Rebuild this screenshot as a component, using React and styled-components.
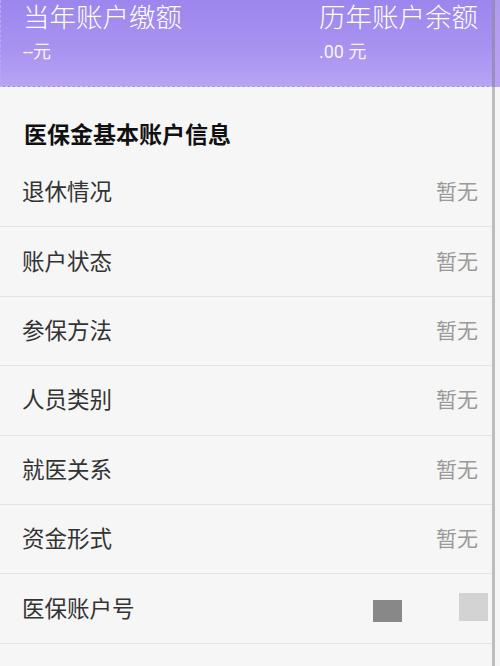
import React from 'react'
import styled, { createGlobalStyle } from 'styled-components'

const GlobalStyle = createGlobalStyle`
  html, body {
    margin: 0;
    padding: 0;
    background: #f6f6f6;
    font-family: Roboto, "Noto Sans CJK SC", sans-serif;
  }
`

const rows = [
  { label: '退休情况', value: '暂无' },
  { label: '账户状态', value: '暂无' },
  { label: '参保方法', value: '暂无' },
  { label: '人员类别', value: '暂无' },
  { label: '就医关系', value: '暂无' },
  { label: '资金形式', value: '暂无' },
  { label: '医保账户号', value: null },
]

const App = () => {
  return (
    <>
      <GlobalStyle />
      <Page>
        <Content>
          <Header>
            <Column>
              <HeadTitle>当年账户缴额</HeadTitle>
              <HeadValue>--元</HeadValue>
            </Column>
            <Column>
              <HeadTitle>历年账户余额</HeadTitle>
              <HeadValue>.00 元</HeadValue>
            </Column>
          </Header>
          <SectionTitle>医保金基本账户信息</SectionTitle>
          {rows.map((el) => (
            <Row key={el.label}>
              <Label>{el.label}</Label>
              {el.value ? (
                <Value>{el.value}</Value>
              ) : (
                <Masked>
                  <Block tone="dark" />
                  <Block tone="light" />
                </Masked>
              )}
            </Row>
          ))}
        </Content>
        <Track>
          <Thumb />
        </Track>
      </Page>
    </>
  )
}

export default App

const Page = styled.div`
  width: 500px;
  height: 666px;
  overflow: hidden;
  display: flex;
  background: #f6f6f6;
`
const Content = styled.div`
  width: 492px;
  display: flex;
  flex-direction: column;
`
const Header = styled.div`
  height: 87px;
  box-sizing: border-box;
  padding: 1px 14px 0 22px;
  display: flex;
  justify-content: space-between;
  background: linear-gradient(180deg, #9c86ee 0%, #a892f0 55%, #b8a3f4 100%);
  border-bottom: 1px dashed #cdbff6;
  border-left: 1px dashed #b9a8f3;
  color: #fff;
`
const Column = styled.div`
  display: flex;
  flex-direction: column;
`
const HeadTitle = styled.div`
  font-family: "Noto Sans CJK SC", sans-serif;
  font-size: 26.5px;
  font-weight: 300;
  line-height: 30px;
  white-space: nowrap;
`
const HeadValue = styled.div`
  font-family: Roboto, "Noto Sans CJK SC", sans-serif;
  font-size: 18px;
  font-weight: 400;
  line-height: 24px;
  margin-top: 9px;
  color: #f6f3ff;
`
const SectionTitle = styled.div`
  padding: 29px 24px 8px;
  font-family: "Noto Sans CJK SC", sans-serif;
  font-size: 23px;
  font-weight: 700;
  line-height: 34px;
  color: #111;
`
const Row = styled.div`
  height: 69.4px;
  box-sizing: border-box;
  padding: 0 14px 4px 22px;
  display: flex;
  align-items: center;
  justify-content: space-between;
  border-bottom: 1px solid #e3e3e3;
`
const Label = styled.div`
  font-family: "Noto Sans CJK SC", sans-serif;
  font-size: 22.5px;
  color: #333;
`
const Value = styled.div`
  font-family: "Noto Sans CJK SC", sans-serif;
  font-size: 21px;
  color: #9a9a9a;
`
const Masked = styled.div`
  display: flex;
  align-items: flex-end;
  gap: 57px;
  margin-right: -10px;
  margin-top: 2px;
`
const Block = styled.span`
  display: block;
  width: 29px;
  height: ${(p) => (p.tone === 'dark' ? '22px' : '28px')};
  margin-bottom: ${(p) => (p.tone === 'dark' ? '0' : '1px')};
  background: ${(p) => (p.tone === 'dark' ? '#888888' : '#d3d3d3')};
  filter: blur(0.6px);
`
const Track = styled.div`
  width: 8px;
  display: flex;
  background: linear-gradient(180deg, #b09bf2 0px, #b7a2f4 87px, #f6f6f6 87px);
`
const Thumb = styled.div`
  width: 3px;
  background: rgba(120, 120, 120, 0.45);
`
